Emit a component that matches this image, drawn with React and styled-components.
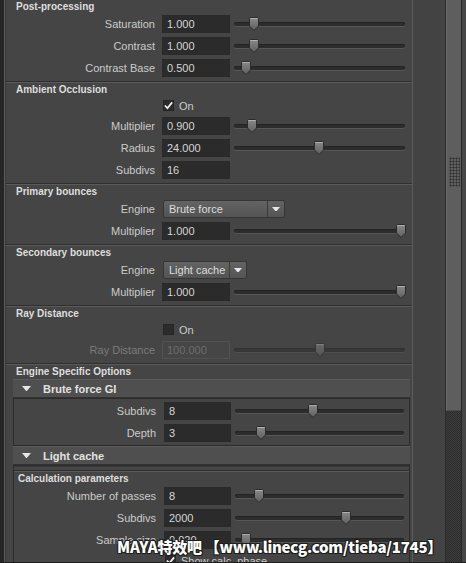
import React from "react";
import styled, { createGlobalStyle } from "styled-components";

const GlobalStyle = createGlobalStyle`
  html, body {
    margin: 0;
    padding: 0;
    background: #444;
  }
  body {
    font-family: "Liberation Sans", Arial, sans-serif;
  }
`;

const Window = styled.div`
  position: relative;
  display: flex;
  width: 466px;
  height: 563px;
  overflow: hidden;
  background: #454545;
  border-bottom: 1px solid #1f1f1f;
  box-sizing: border-box;
`;

const LeftEdge = styled.div`
  flex: 0 0 6px;
  background: linear-gradient(
    to right,
    #262626 0 4px,
    #5c5c5c 4px 5px,
    #3a3a3a 5px 6px
  );
`;

const Content = styled.div`
  flex: 0 0 406px;
  display: flex;
  flex-direction: column;
  overflow: hidden;
`;

const Gutter = styled.div`
  flex: 0 0 32px;
  border-left: 1px solid #5d5d5d;
  background: #434343;
`;

const ScrollBar = styled.div`
  flex: 0 0 15px;
  display: flex;
  flex-direction: column;
  border-left: 1px solid #2c2c2c;
  border-right: 1px solid #262626;
`;

const ScrollThumb = styled.div`
  flex: 0 0 411px;
  display: flex;
  justify-content: center;
  align-items: flex-start;
  padding-top: 157px;
  box-sizing: border-box;
  background: #5e5e5e;
  border-left: 1px solid #6a6a6a;
  border-bottom: 1px solid #4a4a4a;
`;

const Grip = styled.div`
  width: 11px;
  height: 30px;
  background: radial-gradient(circle, #2e2e2e 0 45%, transparent 50%) 0 0 / 3px 3px;
`;

const ScrollTrack = styled.div`
  flex: 1;
  background: repeating-conic-gradient(#2b2b2b 0 25%, #3e3e3e 0 50%) 0 0 / 2px 2px;
`;

const RightEdge = styled.div`
  flex: 0 0 4px;
  background: #474747;
`;

const Section = styled.section`
  border-top: ${(p) => (p.$first ? "none" : "1px solid #2f2f2f")};
  padding-bottom: ${(p) => (p.$open ? 0 : 2)}px;
`;

const Header = styled.div`
  height: ${(p) => (p.$first ? 13 : 14)}px;
  padding: ${(p) => (p.$first ? 0 : 1)}px 0 0 ${(p) => p.$indent || 10}px;
  box-sizing: border-box;
  box-shadow: ${(p) => (p.$first ? "none" : "inset 0 1px 0 #5b5b5b")};
  display: flex;
  align-items: center;
  font-size: 10px;
  font-weight: bold;
  color: #dedede;
  white-space: nowrap;
`;

const Row = styled.div`
  display: flex;
  align-items: center;
  height: ${(p) => p.$h || 22}px;
`;

const Label = styled.div`
  flex: 0 0 ${(p) => (p.$nested ? 142 : 149)}px;
  text-align: right;
  font-size: 11px;
  color: ${(p) => (p.$disabled ? "#7b7b7b" : "#cbcbcb")};
  white-space: nowrap;
`;

const Field = styled.div`
  flex: 0 0 ${(p) => (p.$nested ? 67 : 68)}px;
  height: 18px;
  margin-left: ${(p) => (p.$nested ? 8 : 7)}px;
  padding-left: 4px;
  box-sizing: border-box;
  background: ${(p) => (p.$disabled ? "#464646" : "#2b2b2b")};
  border: 1px solid ${(p) => (p.$disabled ? "#525252" : "#2a2a2a")};
  font-size: 11px;
  line-height: 16px;
  color: ${(p) => (p.$disabled ? "#6c6c6c" : "#d6d6d6")};
`;

const Slider = styled.div`
  flex: 1;
  position: relative;
  height: 4px;
  margin: 0 ${(p) => (p.$nested ? 5 : 7)}px 0 4px;
  border-radius: 2px;
  background: #2c2c2c;
  box-shadow: 0 1px 0 #575757, inset 0 1px 0 #232323;
  opacity: ${(p) => (p.$disabled ? 0.55 : 1)};
`;

const Knob = styled.svg`
  position: absolute;
  top: -5px;
  width: 10px;
  height: 14px;
`;

const CheckBox = styled.div`
  width: 11px;
  height: 11px;
  margin-left: ${(p) => (p.$nested ? 9 : 8)}px;
  background: #2b2b2b;
  border: 1px solid #262626;
  box-sizing: border-box;
  display: flex;
  align-items: center;
  justify-content: center;
`;

const CheckText = styled.div`
  margin-left: 5px;
  font-size: 11px;
  color: #cbcbcb;
  white-space: nowrap;
`;

const Dropdown = styled.div`
  display: flex;
  width: ${(p) => p.$w}px;
  height: 18px;
  margin-left: 8px;
  box-sizing: border-box;
  border: 1px solid #353535;
  border-radius: 2px;
  background: linear-gradient(#636363, #545454);
  font-size: 11px;
  color: #dedede;
`;

const DropText = styled.div`
  flex: 1;
  padding-left: 5px;
  line-height: 16px;
  white-space: nowrap;
`;

const DropArrow = styled.div`
  flex: 0 0 16px;
  border-left: 1px solid #3c3c3c;
  display: flex;
  align-items: center;
  justify-content: center;
`;

const FoldBar = styled.div`
  height: 19px;
  margin: ${(p) => (p.$first ? 1 : 0)}px 2px 0 7px;
  box-sizing: border-box;
  display: flex;
  align-items: center;
  background: #4f4f4f;
  border-top: 1px solid #5a5a5a;
  border-bottom: 1px solid #333;
  font-size: 11px;
  font-weight: bold;
  color: #e2e2e2;
  white-space: nowrap;
`;

const FoldArrow = styled.span`
  display: flex;
  margin-left: 9px;
`;

const FoldTitle = styled.span`
  margin-left: 12px;
`;

const InnerFrame = styled.div`
  margin: 0 2px 0 7px;
  padding: ${(p) => (p.$pad ? "4px 0 0" : "1px 0")};
  border: 1px solid #2b2b2b;
  border-bottom-color: ${(p) => (p.$pad ? "transparent" : "#2b2b2b")};
  box-shadow: ${(p) => (p.$pad ? "inset 0 1px 0 #3a3a3a" : "none")};
`;

const Watermark = styled.div`
  position: absolute;
  left: 117px;
  top: 536px;
  font-family: "Noto Sans CJK SC", "Noto Sans", sans-serif;
  font-size: 15px;
  font-weight: 900;
  letter-spacing: -0.25px;
  color: #fff;
  white-space: nowrap;
  text-shadow: -1px -1px 0 #1e1e1e, 1px -1px 0 #1e1e1e, -1px 1px 0 #1e1e1e,
    1px 1px 0 #1e1e1e, 0 1px 0 #1e1e1e, 1px 0 0 #1e1e1e;
`;

const Tick = () => (
  <svg width="10" height="9" viewBox="0 0 10 9">
    <path d="M1 4.5 L3.8 7.5 L9 1" fill="none" stroke="#f0f0f0" strokeWidth="2" />
  </svg>
);

const Triangle = ({ size = 8 }) => (
  <svg width={size} height={size * 0.6} viewBox="0 0 10 6">
    <path d="M0 0 H10 L5 6 Z" fill="#e6e6e6" />
  </svg>
);

const SliderKnob = ({ at, start }) => (
  <Knob viewBox="0 0 10 14" style={{ left: at - start - 5 }}>
    <defs>
      <linearGradient id="kg" x1="0" y1="0" x2="0" y2="1">
        <stop offset="0" stopColor="#8a8a8a" />
        <stop offset="1" stopColor="#5e5e5e" />
      </linearGradient>
    </defs>
    <path d="M0.5 1.5 Q0.5 0.5 1.5 0.5 H8.5 Q9.5 0.5 9.5 1.5 V9 L5 13.5 L0.5 9 Z" fill="url(#kg)" stroke="#2a2a2a" />
    <path d="M1.5 1.5 H8.5" stroke="#b0b0b0" />
  </Knob>
);

const NumRow = ({ label, value, at, nested, disabled }) => (
  <Row>
    <Label $nested={nested} $disabled={disabled}>{label}</Label>
    <Field $nested={nested} $disabled={disabled}>{value}</Field>
    <Slider $nested={nested} $disabled={disabled}>
      <SliderKnob at={at} start={nested ? 235 : 234} />
    </Slider>
  </Row>
);

const CheckRow = ({ label, checked, nested }) => (
  <Row $h={19}>
    <Label $nested={nested} />
    <CheckBox $nested={nested}>{checked && <Tick />}</CheckBox>
    <CheckText>{label}</CheckText>
  </Row>
);

const DropRow = ({ value, width }) => (
  <Row>
    <Label>Engine</Label>
    <Dropdown $w={width}>
      <DropText>{value}</DropText>
      <DropArrow>
        <Triangle size={8} />
      </DropArrow>
    </Dropdown>
  </Row>
);

const Fold = ({ title, first }) => (
  <FoldBar $first={first}>
    <FoldArrow>
      <Triangle size={9} />
    </FoldArrow>
    <FoldTitle>{title}</FoldTitle>
  </FoldBar>
);

export default function App() {
  return (
    <Window>
      <GlobalStyle />
      <LeftEdge />
      <Content>
        <Section $first>
          <Header $first>Post-processing</Header>
          <NumRow label="Saturation" value="1.000" at={254} />
          <NumRow label="Contrast" value="1.000" at={254} />
          <NumRow label="Contrast Base" value="0.500" at={246} />
        </Section>

        <Section>
          <Header>Ambient Occlusion</Header>
          <CheckRow label="On" checked />
          <NumRow label="Multiplier" value="0.900" at={252} />
          <NumRow label="Radius" value="24.000" at={319} />
          <Row>
            <Label>Subdivs</Label>
            <Field>16</Field>
          </Row>
        </Section>

        <Section>
          <Header>Primary bounces</Header>
          <DropRow value="Brute force" width={122} />
          <NumRow label="Multiplier" value="1.000" at={401} />
        </Section>

        <Section>
          <Header>Secondary bounces</Header>
          <DropRow value="Light cache" width={84} />
          <NumRow label="Multiplier" value="1.000" at={401} />
        </Section>

        <Section>
          <Header>Ray Distance</Header>
          <CheckRow label="On" />
          <NumRow label="Ray Distance" value="100.000" at={320} disabled />
        </Section>

        <Section $open>
          <Header>Engine Specific Options</Header>
          <Fold first title="Brute force GI" />
          <InnerFrame>
            <NumRow nested label="Subdivs" value="8" at={313} />
            <NumRow nested label="Depth" value="3" at={261} />
          </InnerFrame>
          <Fold title="Light cache" />
          <InnerFrame $pad>
            <Section>
              <Header $indent={4}>Calculation parameters</Header>
              <NumRow nested label="Number of passes" value="8" at={259} />
              <NumRow nested label="Subdivs" value="2000" at={346} />
              <NumRow nested label="Sample size" value="0.020" at={246} />
              <CheckRow nested label="Show calc. phase" checked />
            </Section>
          </InnerFrame>
        </Section>
      </Content>
      <Gutter />
      <ScrollBar>
        <ScrollThumb>
          <Grip />
        </ScrollThumb>
        <ScrollTrack />
      </ScrollBar>
      <RightEdge />
      <Watermark>MAYA特效吧 【www.linecg.com/tieba/1745】</Watermark>
    </Window>
  );
}
